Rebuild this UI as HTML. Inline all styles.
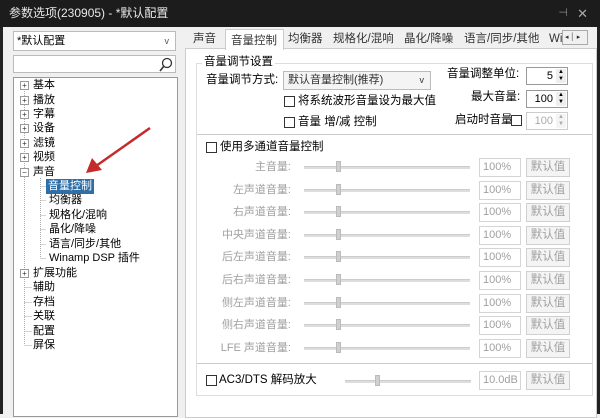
<!DOCTYPE html>
<html><head><meta charset="utf-8"><style>
*{margin:0;padding:0;box-sizing:border-box}
body{width:600px;height:414px;overflow:hidden;background:#f0f0f0;font-family:"Liberation Sans","Noto Sans CJK SC",sans-serif;font-size:11px;color:#000;position:relative}
.a{position:absolute;white-space:nowrap;line-height:13px}
.title{left:0;top:0;width:600px;height:27px;background:#1c1c1c;color:#e8e8e8;font-size:12px;line-height:26px;padding-left:9px}
.lb{left:0;top:27px;width:3px;height:387px;background:#222}
.rb{left:597px;top:27px;width:3px;height:387px;background:#222}
.box{background:#fff;border:1px solid #a8a8a8}
.ti{font-size:11px;line-height:13px}
.pl{width:9px;height:9px;border:1px solid #999;background:#fff;font-size:8px;line-height:7px;text-align:center;color:#333}
.trk{height:3px;background:#ddd;border-top:1px solid #ccc}
.thumb{width:5px;height:11px;background:#d0d0d0;border:1px solid #bbb}
.ed{width:42px;height:19px;border:1px solid #d4d4d4;background:#fff;color:#a0a0a0;line-height:17px;padding-left:3px}
.bt{width:44px;height:19px;border:1px solid #d0d0d0;background:#f4f4f4;color:#a0a0a0;line-height:17px;text-align:center;font-size:11.5px}
.cb{width:11px;height:11px;border:1px solid #333;background:#fff}
.lab{text-align:right;color:#a0a0a0}
</style></head><body>
<div class="a title">参数选项(230905) - *默认配置</div>
<div class="a" style="right:12px;top:7px;color:#aaa;font-size:13px">✕</div>
<div class="a" style="right:32px;top:7px;color:#888;font-size:11px">⊣</div>
<div class="a lb"></div><div class="a rb"></div>

<div class="a box" style="left:13px;top:31px;width:163px;height:20px;border-color:#bbb;line-height:18px;padding-left:3px">*默认配置<span style="position:absolute;right:6px;font-size:9px;color:#555">v</span></div>
<div class="a box" style="left:13px;top:55px;width:163px;height:18px;border-color:#bbb">
<svg class="a" style="right:2px;top:1px" width="15" height="15"><circle cx="9" cy="6" r="4.5" fill="none" stroke="#333" stroke-width="1.3"/><line x1="6" y1="9" x2="2" y2="14" stroke="#333" stroke-width="1.6"/></svg></div>
<div class="a box" style="left:13px;top:77px;width:165px;height:340px;border-color:#999"></div>

<svg class="a" style="left:0;top:0" width="190" height="414">
<g stroke="#aaa" stroke-dasharray="1,1" fill="none">
<line x1="24.5" y1="85" x2="24.5" y2="345"/>
<line x1="40.5" y1="178" x2="40.5" y2="258"/>
<line x1="40.5" y1="186.5" x2="46" y2="186.5"/><line x1="40.5" y1="200.5" x2="46" y2="200.5"/><line x1="40.5" y1="215.5" x2="46" y2="215.5"/><line x1="40.5" y1="229.5" x2="46" y2="229.5"/><line x1="40.5" y1="244.5" x2="46" y2="244.5"/><line x1="40.5" y1="258.5" x2="46" y2="258.5"/>
<line x1="24.5" y1="287.5" x2="32" y2="287.5"/><line x1="24.5" y1="302.5" x2="32" y2="302.5"/><line x1="24.5" y1="316.5" x2="32" y2="316.5"/><line x1="24.5" y1="331.5" x2="32" y2="331.5"/><line x1="24.5" y1="345.5" x2="32" y2="345.5"/>
</g>
<line x1="150" y1="128" x2="96" y2="166" stroke="#c52b2b" stroke-width="2.5"/>
<polygon points="86,173 92,158 102,170" fill="#c52b2b"/>
</svg>

<div class="a pl" style="left:20px;top:81px">+</div><div class="a ti" style="left:33px;top:79px">基本</div>
<div class="a pl" style="left:20px;top:96px">+</div><div class="a ti" style="left:33px;top:94px">播放</div>
<div class="a pl" style="left:20px;top:110px">+</div><div class="a ti" style="left:33px;top:108px">字幕</div>
<div class="a pl" style="left:20px;top:124px">+</div><div class="a ti" style="left:33px;top:122px">设备</div>
<div class="a pl" style="left:20px;top:139px">+</div><div class="a ti" style="left:33px;top:137px">滤镜</div>
<div class="a pl" style="left:20px;top:153px">+</div><div class="a ti" style="left:33px;top:151px">视频</div>
<div class="a pl" style="left:20px;top:168px">−</div><div class="a ti" style="left:33px;top:166px">声音</div>
<div class="a ti" style="left:46px;top:179px;background:#2f6fa8;color:#fff;padding:1px 2px">音量控制</div>
<div class="a ti" style="left:49px;top:194px">均衡器</div>
<div class="a ti" style="left:49px;top:209px">规格化/混响</div>
<div class="a ti" style="left:49px;top:223px">晶化/降噪</div>
<div class="a ti" style="left:49px;top:238px">语言/同步/其他</div>
<div class="a ti" style="left:49px;top:252px">Winamp DSP 插件</div>
<div class="a pl" style="left:20px;top:269px">+</div><div class="a ti" style="left:33px;top:267px">扩展功能</div>
<div class="a ti" style="left:33px;top:281px">辅助</div>
<div class="a ti" style="left:33px;top:296px">存档</div>
<div class="a ti" style="left:33px;top:310px">关联</div>
<div class="a ti" style="left:33px;top:325px">配置</div>
<div class="a ti" style="left:33px;top:339px">屏保</div>

<!-- tab panel -->
<div class="a" style="left:185px;top:48px;width:412px;height:370px;background:#fff;border:1px solid #ccc"></div>
<div class="a" style="left:225px;top:29px;width:59px;height:21px;background:#fff;border:1px solid #ccc;border-bottom:none"></div>
<div class="a" style="left:193px;top:33px;font-size:11.5px;color:#333">声音</div>
<div class="a" style="left:231px;top:35px;font-size:11.5px;color:#333">音量控制</div>
<div class="a" style="left:288px;top:33px;font-size:11.5px;color:#333">均衡器</div>
<div class="a" style="left:333px;top:33px;font-size:11.5px;color:#333">规格化/混响</div>
<div class="a" style="left:404px;top:33px;font-size:11.5px;color:#333">晶化/降噪</div>
<div class="a" style="left:464px;top:33px;font-size:11.5px;color:#333">语言/同步/其他</div>
<div class="a" style="left:549px;top:33px;font-size:11.5px;color:#333">Wi</div>
<div class="a" style="left:562px;top:30px;width:26px;height:15px;background:#f0f0f0;border:1px solid #aaa;font-size:7px;line-height:13px;color:#333">&nbsp;◂&nbsp;│&nbsp;▸</div>

<!-- group 1 -->
<div class="a" style="left:196px;top:63px;width:397px;height:333px;border:1px solid #ddd"></div>
<div class="a" style="left:202px;top:56px;background:#fff;padding:0 2px;font-size:11.5px">音量调节设置</div>
<div class="a" style="left:206px;top:74px;font-size:11.5px">音量调节方式:</div>
<div class="a" style="left:283px;top:71px;width:148px;height:19px;border:1px solid #bbb;background:#f4f4f4;line-height:17px;padding-left:4px;color:#333">默认音量控制(推荐)<span style="position:absolute;right:6px;font-size:9px">v</span></div>
<div class="a cb" style="left:284px;top:96px"></div><div class="a" style="left:298px;top:95px;font-size:11.5px">将系统波形音量设为最大值</div>
<div class="a cb" style="left:284px;top:117px"></div><div class="a" style="left:298px;top:116px;font-size:11.5px">音量 增/减 控制</div>
<div class="a" style="left:447px;top:68px;font-size:11.5px">音量调整单位:</div>
<div class="a" style="left:526px;top:67px;width:42px;height:18px;border:1px solid #999;background:#fff;text-align:right;padding-right:14px;line-height:16px">5<span style="position:absolute;right:1px;top:1px;width:10px;height:14px;background:#eee;font-size:6px;line-height:7px;text-align:center">▲<br>▼</span></div>
<div class="a" style="left:471px;top:91px;font-size:11.5px">最大音量:</div>
<div class="a" style="left:526px;top:90px;width:42px;height:18px;border:1px solid #999;background:#fff;text-align:right;padding-right:14px;line-height:16px">100<span style="position:absolute;right:1px;top:1px;width:10px;height:14px;background:#eee;font-size:6px;line-height:7px;text-align:center">▲<br>▼</span></div>
<div class="a" style="left:455px;top:114px;font-size:11.5px">启动时音量</div>
<div class="a cb" style="left:511px;top:115px"></div>
<div class="a" style="left:526px;top:112px;width:42px;height:18px;border:1px solid #ccc;background:#fff;text-align:right;padding-right:14px;line-height:16px;color:#aaa">100<span style="position:absolute;right:1px;top:1px;width:10px;height:14px;background:#f4f4f4;font-size:6px;line-height:7px;text-align:center">▲<br>▼</span></div>
<div class="a" style="left:197px;top:134px;width:395px;height:1px;background:#ccc"></div>

<div class="a cb" style="left:206px;top:142px"></div><div class="a" style="left:220px;top:141px;font-size:11.5px">使用多通道音量控制</div>

<div id="rows"></div>
<div class="a" style="left:197px;top:363px;width:395px;height:1px;background:#ccc"></div>
<div class="a cb" style="left:206px;top:375px"></div><div class="a" style="left:219px;top:374px;font-size:11.5px">AC3/DTS 解码放大</div>
<div class="a trk" style="left:345px;top:380px;width:126px"></div>
<div class="a thumb" style="left:375px;top:375px"></div>
<div class="a ed" style="left:479px;top:371px">10.0dB</div>
<div class="a bt" style="left:526px;top:371px">默认值</div>
<script>
var L=["主音量:","左声道音量:","右声道音量:","中央声道音量:","后左声道音量:","后右声道音量:","侧左声道音量:","侧右声道音量:","LFE 声道音量:"],h="";
for(var i=0;i<9;i++){var y=160+i*22.6;
h+='<div class="a lab" style="left:200px;top:'+(y+1)+'px;width:91px">'+L[i]+'</div>';
h+='<div class="a trk" style="left:304px;top:'+(y+6)+'px;width:166px"></div>';
h+='<div class="a thumb" style="left:336px;top:'+(y+1)+'px"></div>';
h+='<div class="a ed" style="left:479px;top:'+(y-2)+'px">100%</div>';
h+='<div class="a bt" style="left:526px;top:'+(y-2)+'px">默认值</div>';}
document.getElementById("rows").outerHTML=h;
</script>
</body></html>
